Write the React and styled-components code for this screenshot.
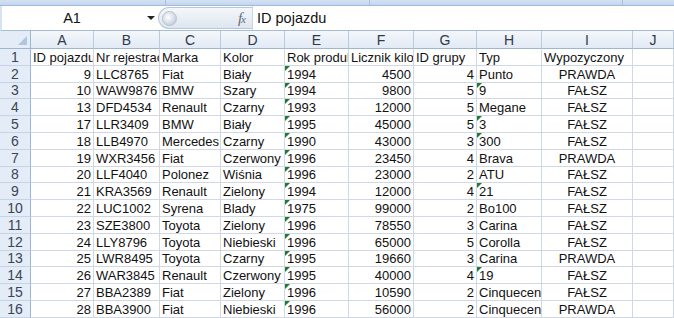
import React from 'react';
import styled, { createGlobalStyle, css } from 'styled-components';

const GlobalStyle = createGlobalStyle`
  html, body {
    margin: 0;
    padding: 0;
    background: #ffffff;
  }
  body {
    font-family: "Liberation Sans", Arial, sans-serif;
  }
`;

const COLUMNS = ['A', 'B', 'C', 'D', 'E', 'F', 'G', 'H', 'I', 'J'];
const WIDTHS = [31, 63, 66, 61, 64, 64, 65, 63, 65, 91];

const HEADER = [
  'ID pojazdu',
  'Nr rejestracyjny',
  'Marka',
  'Kolor',
  'Rok produkcji',
  'Licznik kilometrów',
  'ID grupy',
  'Typ',
  'Wypozyczony',
];

const ROWS = [
  [9, 'LLC8765', 'Fiat', 'Biały', '1994', 4500, 4, 'Punto', 'PRAWDA'],
  [10, 'WAW9876', 'BMW', 'Szary', '1994', 9800, 5, '9', 'FAŁSZ'],
  [13, 'DFD4534', 'Renault', 'Czarny', '1993', 12000, 5, 'Megane', 'FAŁSZ'],
  [17, 'LLR3409', 'BMW', 'Biały', '1995', 45000, 5, '3', 'FAŁSZ'],
  [18, 'LLB4970', 'Mercedes', 'Czarny', '1990', 43000, 3, '300', 'FAŁSZ'],
  [19, 'WXR3456', 'Fiat', 'Czerwony', '1996', 23450, 4, 'Brava', 'PRAWDA'],
  [20, 'LLF4040', 'Polonez', 'Wiśnia', '1996', 23000, 2, 'ATU', 'FAŁSZ'],
  [21, 'KRA3569', 'Renault', 'Zielony', '1994', 12000, 4, '21', 'FAŁSZ'],
  [22, 'LUC1002', 'Syrena', 'Blady', '1975', 99000, 2, 'Bo100', 'FAŁSZ'],
  [23, 'SZE3800', 'Toyota', 'Zielony', '1996', 78550, 3, 'Carina', 'FAŁSZ'],
  [24, 'LLY8796', 'Toyota', 'Niebieski', '1996', 65000, 5, 'Corolla', 'FAŁSZ'],
  [25, 'LWR8495', 'Toyota', 'Czarny', '1995', 19660, 3, 'Carina', 'PRAWDA'],
  [26, 'WAR3845', 'Renault', 'Czerwony', '1995', 40000, 4, '19', 'FAŁSZ'],
  [27, 'BBA2389', 'Fiat', 'Zielony', '1996', 10590, 2, 'Cinquecento', 'FAŁSZ'],
  [28, 'BBA3900', 'Fiat', 'Niebieski', '1996', 56000, 2, 'Cinquecento', 'PRAWDA'],
];

// rows are ~16.8px tall in the shot, round the boundaries
const rowHeights = () => {
  const out = [];
  let prev = 0;
  for (let i = 1; i <= 16; i++) {
    const b = Math.round(16.8 * i);
    out.push(b - prev);
    prev = b;
  }
  return out;
};

const Page = styled.div`
  width: 674px;
  height: 318px;
  overflow: hidden;
  display: flex;
  flex-direction: column;
  background: #fff;
`;

const RibbonEdge = styled.div`
  height: 5px;
  flex: none;
  background: linear-gradient(#d3e1f3, #c4d6ee);
  border-bottom: 1px solid #9fb9dc;
  display: flex;
`;

const RibbonGroup = styled.div`
  width: ${p => p.$w}px;
  border-right: 1px solid #a9c0df;
  flex: none;
`;

const FormulaBar = styled.div`
  height: 24px;
  flex: none;
  display: flex;
  align-items: stretch;
  background: #fff;
  border-bottom: 1px solid #a8bcd6;
  border-left: 2px solid #d6e3f3;
`;

const NameBox = styled.div`
  width: 156px;
  flex: none;
  display: flex;
  align-items: center;
  position: relative;
  font-size: 14.5px;
  color: #111;
`;

const NameText = styled.span`
  flex: 1;
  text-align: center;
  padding-right: 16px;
`;

const DropArrow = styled.span`
  position: absolute;
  right: 3px;
  top: 10px;
  width: 0;
  height: 0;
  border-left: 4px solid transparent;
  border-right: 4px solid transparent;
  border-top: 4px solid #222;
`;

const Pill = styled.div`
  width: 83px;
  flex: none;
  margin: 1px 0;
  display: flex;
  align-items: center;
  justify-content: space-between;
  border-radius: 11px 0 0 11px;
  border: 1px solid #b7c6d9;
  border-right: none;
  background: linear-gradient(#f4f7fb, #dfe6ef);
  padding: 0 7px 0 3px;
`;

const Knob = styled.span`
  width: 13px;
  height: 13px;
  border-radius: 50%;
  background: radial-gradient(circle at 40% 40%, #ffffff, #c9d3de 70%, #aab8c8);
  border: 1px solid #b5c1cf;
`;

const Fx = styled.span`
  font-family: "Liberation Serif", "Times New Roman", serif;
  font-style: italic;
  color: #5d6b7a;
  font-size: 15px;
  letter-spacing: -1px;

  small {
    font-size: 11px;
  }
`;

const FormulaInput = styled.div`
  flex: 1;
  display: flex;
  align-items: center;
  padding-left: 4px;
  border-left: 1px solid #c9d6e6;
  font-size: 14.5px;
  color: #111;
`;

const Sheet = styled.div`
  flex: none;
  display: grid;
  grid-template-columns: ${WIDTHS.map(w => `${w}px`).join(' ')} 1fr;
  grid-template-rows: 18px ${p => p.$rows};
  font-size: 13px;
  color: #111;
`;

const CornerCell = styled.div`
  position: relative;
  background: #e4ecf7;
  border-right: 1px solid #9eb6ce;
  border-bottom: 1px solid #9eb6ce;

  &::after {
    content: '';
    position: absolute;
    right: 3px;
    bottom: 3px;
    width: 0;
    height: 0;
    border-left: 9px solid transparent;
    border-bottom: 9px solid #b3c5dd;
  }
`;

const ColHead = styled.div`
  background: linear-gradient(#f4f7fb, #e2eaf5);
  border-right: 1px solid #bccbdc;
  border-bottom: 1px solid #9eb6ce;
  color: #2f3a48;
  display: flex;
  align-items: center;
  justify-content: center;
  font-size: 14px;
`;

const RowHead = styled.div`
  background: #e4ecf7;
  border-right: 1px solid #9eb6ce;
  border-bottom: 1px solid #c5d3e5;
  color: #3a4656;
  display: flex;
  align-items: flex-end;
  justify-content: center;
  font-size: 14px;
  line-height: 16px;
`;

const Cell = styled.div`
  position: relative;
  overflow: hidden;
  white-space: nowrap;
  border-right: 1px solid #d0d7e5;
  border-bottom: 1px solid #d0d7e5;
  display: flex;
  align-items: flex-end;
  line-height: 15px;
  padding: 0 2px;
  justify-content: ${p =>
    p.$align === 'right' ? 'flex-end' : p.$align === 'center' ? 'center' : 'flex-start'};

  ${p =>
    p.$flag &&
    css`
      &::before {
        content: '';
        position: absolute;
        left: 0;
        top: 0;
        width: 0;
        height: 0;
        border-top: 5px solid #1f7a36;
        border-right: 5px solid transparent;
      }
    `}
`;

const alignFor = (col, value) => {
  if (col === 8) return 'center';
  if (typeof value === 'number') return 'right';
  return 'left';
};

const isNumericText = value => typeof value === 'string' && /^\d+$/.test(value);

const App = () => {
  const rows = rowHeights();
  const data = [HEADER, ...ROWS];

  return (
    <>
      <GlobalStyle />
      <Page>
        <RibbonEdge>
          <RibbonGroup $w={165} />
          <RibbonGroup $w={203} />
          <RibbonGroup $w={252} />
        </RibbonEdge>
        <FormulaBar>
          <NameBox>
            <NameText>A1</NameText>
            <DropArrow />
          </NameBox>
          <Pill>
            <Knob />
            <Fx>
              f<small>x</small>
            </Fx>
          </Pill>
          <FormulaInput>ID pojazdu</FormulaInput>
        </FormulaBar>
        <Sheet $rows={rows.map(h => `${h}px`).join(' ')}>
          <CornerCell />
          {COLUMNS.map(c => (
            <ColHead key={c}>{c}</ColHead>
          ))}
          {data.map((row, r) => (
            <React.Fragment key={r}>
              <RowHead>{r + 1}</RowHead>
              {row.map((value, c) => (
                <Cell
                  key={c}
                  $align={r === 0 ? 'left' : alignFor(c, value)}
                  $flag={r > 0 && isNumericText(value)}
                >
                  {value}
                </Cell>
              ))}
              <Cell />
            </React.Fragment>
          ))}
        </Sheet>
      </Page>
    </>
  );
};

export default App;
